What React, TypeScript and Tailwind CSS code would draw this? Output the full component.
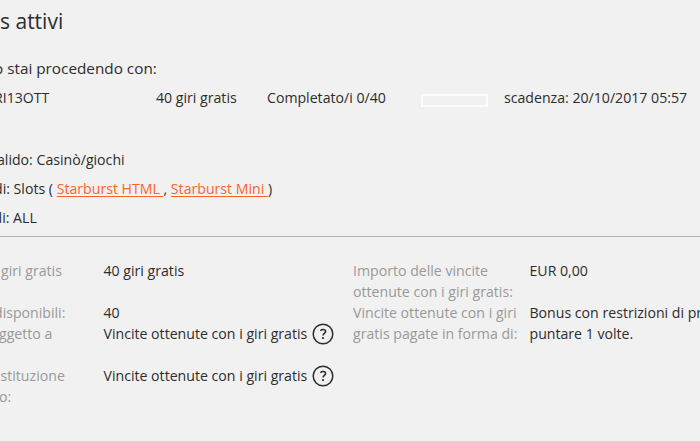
import type { ReactNode } from 'react'
import clsx from 'clsx'

function HelpIcon() {
  return (
    <svg viewBox="0 0 22 22" className="ml-[5px] size-[22px] shrink-0" fill="none" stroke="#2d2d2d">
      <circle cx="11" cy="11" r="9.8" strokeWidth="1.5" />
      <path d="M8.4 7.7C9.1 6.9 9.9 6.5 11 6.5c1.6 0 2.6.9 2.6 2.1 0 1.9-2.5 1.9-2.5 3.9" strokeWidth="1.6" />
      <circle cx="11" cy="15.1" r="1.1" fill="#2d2d2d" stroke="none" />
    </svg>
  )
}

function Line({ children, className }: { children?: ReactNode; className?: string }) {
  return <div className={clsx('flex h-[21px] items-center whitespace-pre', className)}>{children}</div>
}

function GameLink({ children }: { children: string }) {
  return (
    <a href="#" className="text-[#ff6426] underline decoration-1 underline-offset-2">
      {children}
    </a>
  )
}

export default function App() {
  return (
    <main className="h-[441px] w-[700px] overflow-hidden bg-[#f1f1f1] font-['Open_Sans',sans-serif] text-[14.13px] leading-[21px] whitespace-pre text-[#2d2d2d]">
      <h1 className="mt-[6px] h-[30px] text-[21px] leading-[30px]">s attivi</h1>
      <h2 className="-ml-[6px] mt-[21px] h-[22px] text-[15.3px] leading-[22px]">o stai procedendo con:</h2>

      {/* Active bonus */}
      <div className="mt-[8px] flex h-[21px] items-center">
        <span className="-ml-[6px] w-[162px]">RI13OTT</span>
        <span className="w-[111px]">40 giri gratis</span>
        <span className="w-[154px]">Completato/i 0/40</span>
        <span className="mt-[5px] h-[13px] w-[67px] border-2 border-[#fcfcfc]" />
        <span className="ml-[16px]">scadenza: 20/10/2017 05:57</span>
      </div>

      {/* Where it can be used */}
      <div className="mt-[37px] h-[92px] border-b border-[#b4b4b4] leading-[29px]">
        <p className="-ml-[3px]">alido: Casinò/giochi</p>
        <p className="-ml-[6px]">
          di: Slots ( <GameLink>{'Starburst HTML '}</GameLink>, <GameLink>{'Starburst Mini '}</GameLink>)
        </p>
        <p className="-ml-[6.5px]">di: ALL</p>
      </div>

      {/* Details */}
      <div className="mt-[23px] flex">
        <div className="w-[103.5px] shrink-0 text-[#999]">
          <Line className="ml-[1px]">giri gratis</Line>
          <Line />
          <Line className="-ml-[6px]">disponibili:</Line>
          <Line className="-ml-[1px]">ggetto a</Line>
          <Line />
          <Line className="ml-[0.5px]">stituzione</Line>
          <Line className="-ml-[1px]">o:</Line>
        </div>
        <div className="w-[249.5px] shrink-0">
          <Line>40 giri gratis</Line>
          <Line />
          <Line>40</Line>
          <Line>Vincite ottenute con i giri gratis<HelpIcon /></Line>
          <Line />
          <Line>Vincite ottenute con i giri gratis<HelpIcon /></Line>
        </div>
        <div className="w-[176.5px] shrink-0 text-[#999]">
          <Line>Importo delle vincite</Line>
          <Line>ottenute con i giri gratis:</Line>
          <Line>Vincite ottenute con i giri</Line>
          <Line>gratis pagate in forma di:</Line>
        </div>
        <div className="shrink-0">
          <Line>EUR 0,00</Line>
          <Line />
          <Line>Bonus con restrizioni di pr</Line>
          <Line>puntare 1 volte.</Line>
        </div>
      </div>
    </main>
  )
}
